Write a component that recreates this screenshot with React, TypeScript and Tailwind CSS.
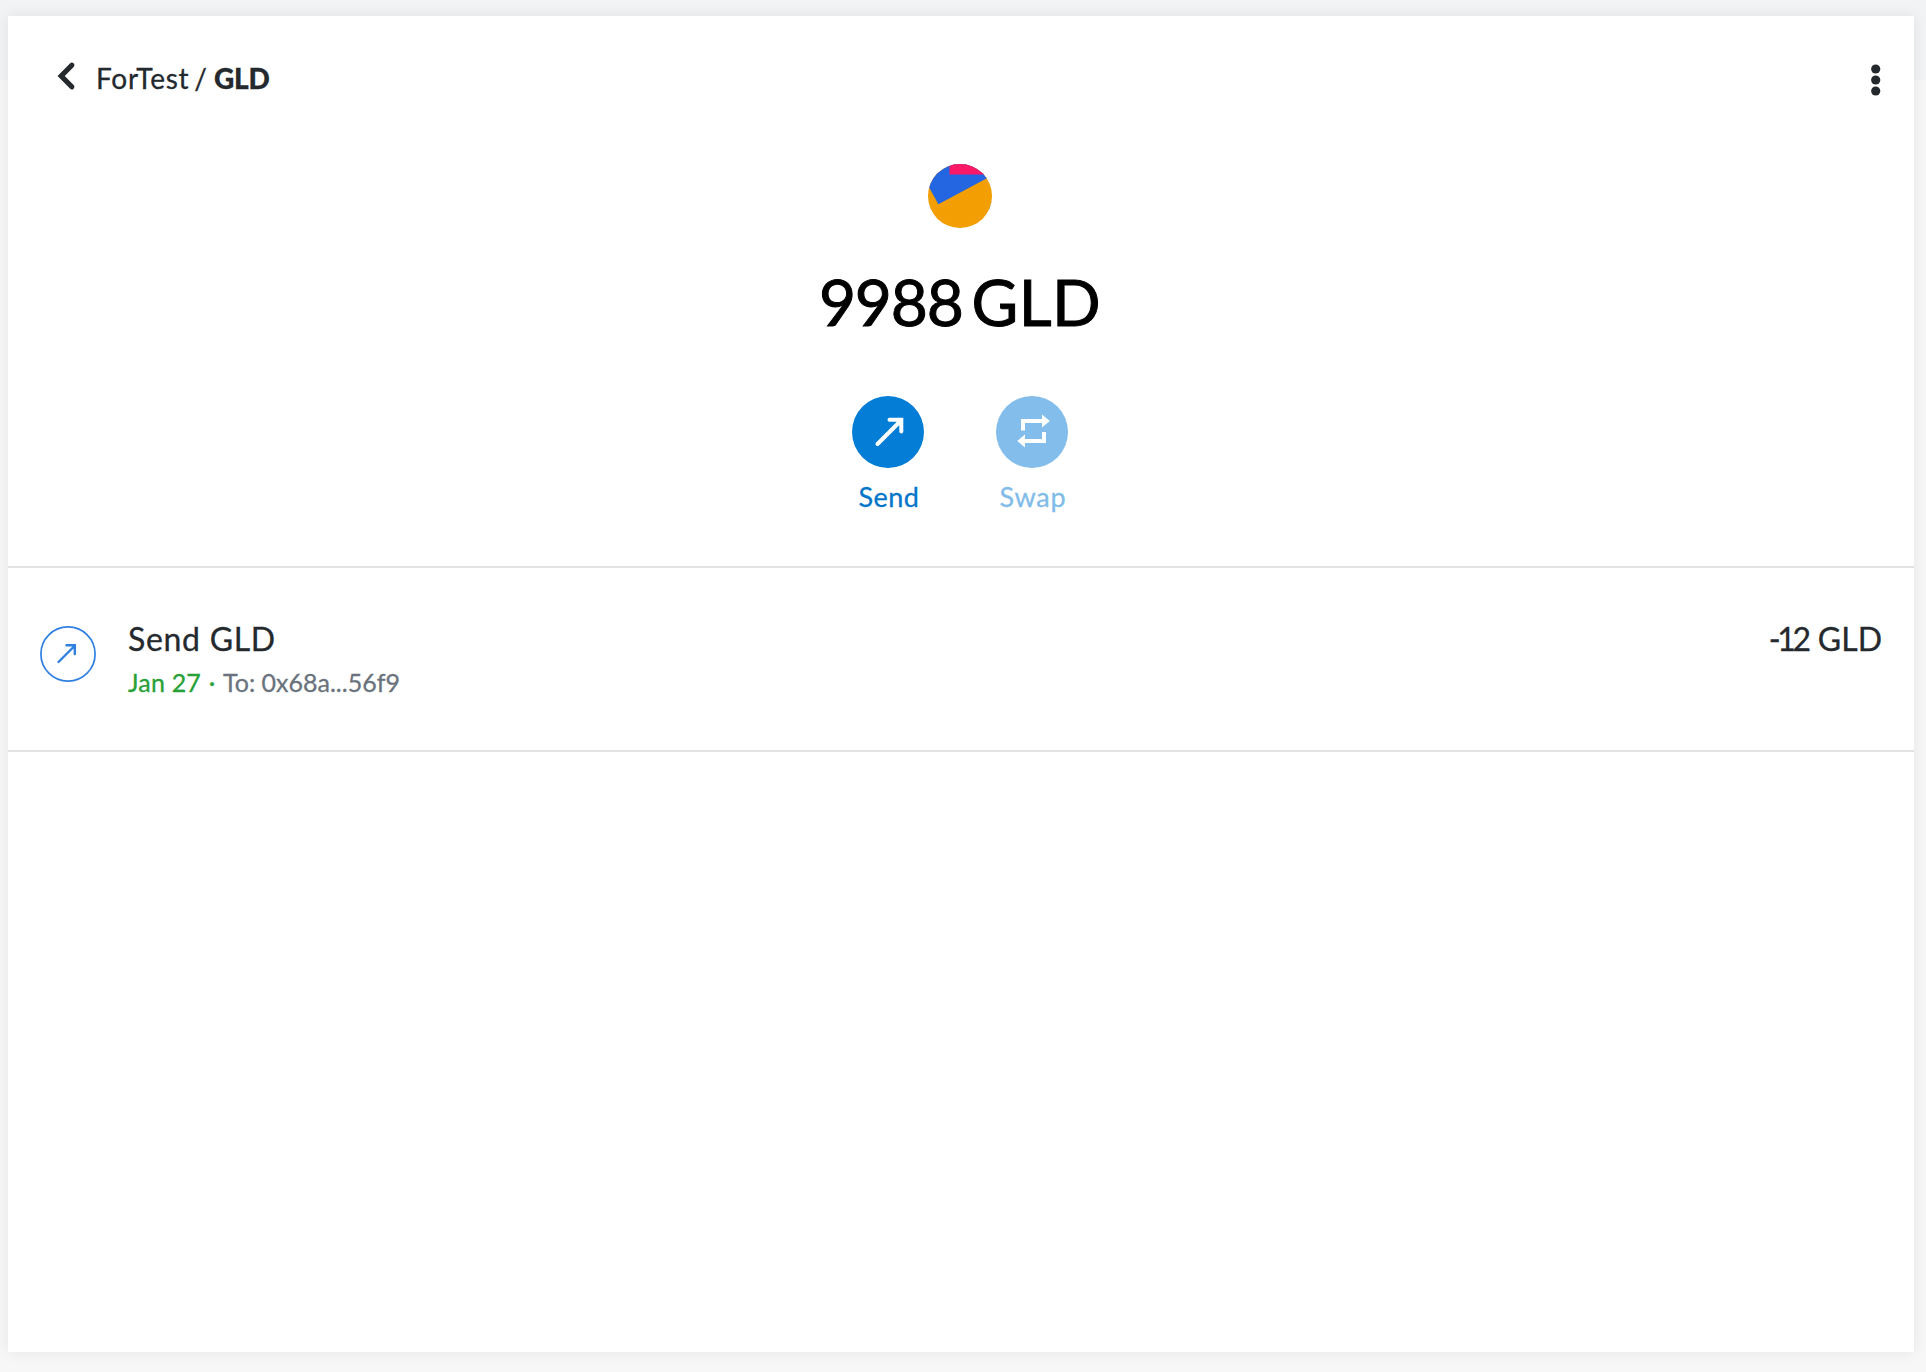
const font = "font-['Lato','Open_Sans',sans-serif]";

function Chevron() {
  return (
    <svg width="20" height="32" viewBox="0 0 20 32" className="shrink-0">
      <path d="M14.8 5.2 4.2 16 14.8 26.8" fill="none" stroke="#24292e" strokeWidth="5.2" strokeLinecap="round" strokeLinejoin="miter" />
    </svg>
  );
}

function Dots() {
  return (
    <svg width="10" height="32" viewBox="0 0 10 32">
      <circle cx="4.7" cy="5" r="4.6" fill="#24292e" />
      <circle cx="4.7" cy="16" r="4.6" fill="#24292e" />
      <circle cx="4.7" cy="27" r="4.6" fill="#24292e" />
    </svg>
  );
}

function Avatar() {
  return (
    <svg width="64" height="64" viewBox="0 0 64 64">
      <defs>
        <clipPath id="avatar">
          <circle cx="32" cy="32" r="32" />
        </clipPath>
      </defs>
      <g clipPath="url(#avatar)">
        <rect width="64" height="64" fill="#f39e02" />
        <path d="M60.5 47 64 37v10z" fill="#1c6b5e" />
        <path d="M-7 9 10.4 40.2 70 8.2V-6H-6z" fill="#2465e1" />
        <path d="M21.5-2H60v12.5H21.5z" fill="#fb1867" />
      </g>
    </svg>
  );
}

function SendGlyph() {
  return (
    <svg width="72" height="72" viewBox="0 0 72 72" fill="none" stroke="#fff" strokeWidth="4" strokeLinecap="round">
      <path d="M25.5 48 48.5 25M37.5 23.8H49.3V35.5" />
    </svg>
  );
}

function SwapGlyph() {
  return (
    <svg width="72" height="72" viewBox="0 0 72 72" fill="#fff">
      <path d="M25 34.5V23H46V18.4L53.8 25 46 31.6V27H29V34.5z" />
      <path d="M50 36V47H29V51.6L21.2 45 29 38.4V43H46V36z" />
    </svg>
  );
}

export default function App() {
  return (
    <div className={`h-[1372px] w-full overflow-hidden bg-[linear-gradient(#f2f3f4_80px,#f7f7f7_80px)] pt-4 pr-3 pl-2 ${font}`}>
      <main className="flex h-[1336px] flex-col bg-white text-[#24292e] shadow-[0_0_14px_rgba(0,0,0,0.08)]">
        <header className="flex h-32 items-start justify-between pt-11 pr-[33px] pl-[49px]">
          <div className="flex h-8 items-center">
            <Chevron />
            <div className="flex pt-[3px] pl-[19px] text-[28px] leading-8 [-webkit-text-stroke:0.3px]">
              <span className="tracking-[0.7px]">ForTest</span>
              <span className="ml-[5px]">/</span>
              <span className="ml-[7px] font-black tracking-[-0.2px]">GLD</span>
            </div>
          </div>
          <div className="pt-1">
            <Dots />
          </div>
        </header>
        <section className="flex h-[424px] flex-col items-center border-b-2 border-[#e2e3e4] pt-5 pr-0.5">
          <Avatar />
          <h1 className="mt-[38px] flex h-[72px] gap-[9px] text-[64px] leading-[72px] text-black [-webkit-text-stroke:1px]">
            <span className="tracking-[-1.2px]">9988</span>
            <span className="tracking-[0.4px]">GLD</span>
          </h1>
          <div className="mt-[58px] flex gap-[72px] text-[27px] leading-8 [-webkit-text-stroke:0.3px]">
            <button className="flex w-[72px] flex-col items-center text-[#0376c9]">
              <span className="rounded-full bg-[#037dd6]">
                <SendGlyph />
              </span>
              <span className="mt-[13px] pl-0.5 tracking-[0.5px]">Send</span>
            </button>
            <button className="flex w-[72px] flex-col items-center text-[#81bce9]">
              <span className="rounded-full bg-[#82bdeb]">
                <SwapGlyph />
              </span>
              <span className="mt-[13px] pl-0.5 tracking-[0.8px]">Swap</span>
            </button>
          </div>
        </section>
        <section className="flex h-[184px] items-start border-b-2 border-[#e2e3e4] pt-[49px] pr-8 pl-8 [-webkit-text-stroke:0.3px]">
          <svg width="56" height="56" viewBox="0 0 56 56" fill="none" stroke="#2f80e0" className="mt-[9px] shrink-0">
            <circle cx="28" cy="28" r="27.1" strokeWidth="1.7" />
            <path d="M18.5 36 35 19.5M26.5 19.3H34.8V28" strokeWidth="2.4" strokeLinecap="round" />
          </svg>
          <div className="ml-8 flex-1">
            <div className="text-[32px] leading-[43px] tracking-[0.7px]">Send GLD</div>
            <div className="mt-1 flex text-[25px] leading-9 text-[#6a737d]">
              <span className="tracking-[0.2px] text-[#28a138]">Jan 27</span>
              <span className="w-[22px] text-center text-[#28a138]">·</span>
              <span>To: 0x68a...56f9</span>
            </div>
          </div>
          <div className="text-[32px] leading-[43px]">
            <span className="tracking-[-3.4px]">-12</span>
            <span className="ml-[2px]"> GLD</span>
          </div>
        </section>
      </main>
    </div>
  );
}
